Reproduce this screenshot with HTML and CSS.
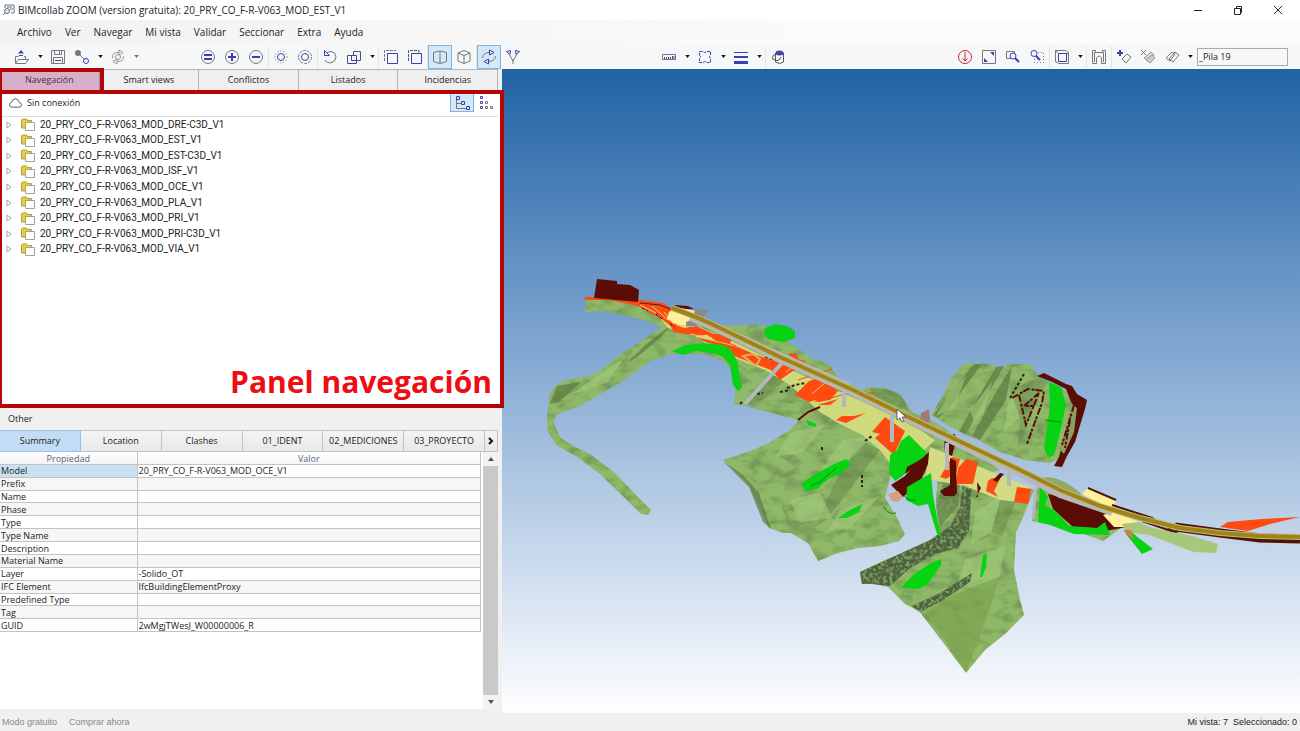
FILE: index.html
```html
<!DOCTYPE html>
<html lang="es">
<head>
    <meta charset="UTF-8">
    <meta name="viewport" content="width=device-width, initial-scale=1.0">
    <title>BIMcollab ZOOM</title>
    <link rel="stylesheet" href="styles.css">
</head>
<body>
    <!-- Shared icons -->
    <svg class="sprite" aria-hidden="true">
        <symbol id="caret" viewBox="0 0 6 4"><path d="M0 0h6L3 4z" fill="currentColor"/></symbol>
        <symbol id="folder" viewBox="0 0 14 13">
            <path d="M.500 10V2l1-1h4l1 1.500h4V5H4.500v5z" fill="#eccb3c" stroke="#b89c2c"/>
            <path d="M4.500 4.500h9v8h-9z" fill="#fff" stroke="#a3a096"/>
        </symbol>
        <symbol id="expand" viewBox="0 0 6 8"><path d="M1 1l4 3-4 3z" fill="#fff" stroke="#a5a5a5"/></symbol>
    </svg>

    <header class="titlebar">
        <svg class="app-icon" viewBox="0 0 12 12"><path d="M2 1h9v8H8M2 1v3M4 3h5M7 5h3" fill="none" stroke="#66737f"/><circle cx="4" cy="7" r="2.500" fill="#dde9f1" stroke="#586c7c"/><path d="M2 9L0 11" stroke="#586c7c"/></svg>
        <h1>BIMcollab ZOOM (version gratuita): 20_PRY_CO_F-R-V063_MOD_EST_V1</h1>
        <div class="window-controls">
            <button aria-label="Minimizar"><svg viewBox="0 0 10 10"><path d="M1 5.500h8"/></svg></button>
            <button aria-label="Restaurar"><svg viewBox="0 0 10 10"><path d="M1.500 3.500h6v6h-6zM3.500 3V1.500h5v6H8"/></svg></button>
            <button aria-label="Cerrar"><svg viewBox="0 0 10 10"><path d="M1 1l8 8M9 1L1 9"/></svg></button>
        </div>
    </header>

    <nav class="menubar" aria-label="Menú">
        <button>Archivo</button>
        <button>Ver</button>
        <button>Navegar</button>
        <button>Mi vista</button>
        <button>Validar</button>
        <button>Seccionar</button>
        <button>Extra</button>
        <button>Ayuda</button>
    </nav>

    <div class="toolbar">
        <div class="toolbar-left">
            <div class="tools">
                <button aria-label="Abrir"><svg viewBox="0 0 16 16"><path class="g" d="M1.500 14V7.500h3M1.500 14.500h10l3-4h-10l-3 4M11.500 10V7.500H10"/><path class="bf" d="M7 1l3 3.500H4z"/><path class="b" d="M5 6.500h4"/></svg></button>
                <button class="drop" aria-label="Abrir opciones"><svg><use href="#caret"/></svg></button>
                <button aria-label="Guardar"><svg viewBox="0 0 16 16"><path class="g" d="M1.500 1.500h13v13h-13zM4.500 1.500v4h7v-4M3.500 14V8.500h9V14"/><path class="b" d="M9.500 2.500v2M5 11.500h6"/></svg></button>
                <button aria-label="Vincular"><svg viewBox="0 0 16 16"><circle cx="4" cy="4" r="3" fill="#777"/><path class="g" d="M5 5l6 6"/><circle class="b" cx="12" cy="12" r="2.500"/></svg></button>
                <button class="drop" aria-label="Vincular opciones"><svg><use href="#caret"/></svg></button>
                <button aria-label="Sincronizar"><svg viewBox="0 0 16 16"><circle class="l" cx="8" cy="8" r="2.500"/><path class="l" d="M2.500 9Q2 3 9 3.500M13.500 7q.500 6-6.500 5.500M9 1l4 2.500L9 6zM7 10l-4 2.500L7 15z"/></svg></button>
                <button class="drop muted" aria-label="Sincronizar opciones"><svg><use href="#caret"/></svg></button>
            </div>
            <div class="tools">
                <button aria-label="Igual"><svg viewBox="0 0 16 16"><circle class="g" cx="8" cy="8" r="6.500"/><path class="bb" d="M4 6h8M4 10h8"/></svg></button>
                <button aria-label="Añadir"><svg viewBox="0 0 16 16"><circle class="g" cx="8" cy="8" r="6.500"/><path class="bb" d="M4 8h8M8 4v8"/></svg></button>
                <button aria-label="Quitar"><svg viewBox="0 0 16 16"><circle class="g" cx="8" cy="8" r="6.500"/><path class="bb" d="M4 8h8"/></svg></button>
                <i class="sep"></i>
                <button aria-label="Mostrar"><svg viewBox="0 0 16 16"><circle class="b" cx="8" cy="8" r="3.500"/><circle class="g dots" cx="8" cy="8" r="6"/></svg></button>
                <button aria-label="Aislar"><svg viewBox="0 0 16 16"><circle class="b" cx="8" cy="8" r="3.500"/><circle class="g dash" cx="8" cy="8" r="6.500"/></svg></button>
                <i class="sep"></i>
                <button aria-label="Restablecer"><svg viewBox="0 0 16 16"><path class="g" d="M5 3.500Q9 1 12.500 4q3 4 0 8-4 3.500-8 1L3 11"/><path class="b" d="M2.500 1.500v5h5z"/></svg></button>
                <button aria-label="Componentes"><svg viewBox="0 0 16 16"><path class="d" d="M1.500 14.500v-8h6v-4h7v9h-4"/><path class="b" d="M7.500 6.500h-2v5h5v-5zM1.500 14.500h9v-3"/></svg></button>
                <button class="drop" aria-label="Componentes opciones"><svg><use href="#caret"/></svg></button>
                <i class="sep"></i>
                <button aria-label="Seleccionar"><svg viewBox="0 0 16 16"><path class="g dash" d="M1.500 12V1.500H13"/><path class="b" d="M4.500 4.500h10v10h-10z"/></svg></button>
                <button aria-label="Selección múltiple"><svg viewBox="0 0 16 16"><path class="b" d="M4.500 4.500h10v10h-10z"/><path class="d dash" d="M1.500 12V1.500H12V4"/></svg></button>
                <i class="sep"></i>
                <button class="active" aria-label="Perspectiva"><svg viewBox="0 0 16 16"><path class="g" d="M1.500 3.500L8 2l6.500 1.500v9L8 14.500l-6.500-2zM8 2v12"/></svg></button>
                <button aria-label="Ortogonal"><svg viewBox="0 0 16 16"><path class="g" d="M2 4l6-2.500L14 4v8l-6 2.500L2 12zM2 4l6 2.500L14 4M8 6.500v8"/></svg></button>
                <i class="sep"></i>
                <button class="active" aria-label="Orbitar"><svg viewBox="0 0 16 16"><path class="g" d="M1.500 9Q2 4 8 3.500M14.500 7Q14 12 8 12.500"/><path class="b" d="M8.500 1v5L13 3.500zM7.500 10v5L3 12.500z"/></svg></button>
                <button aria-label="Caminar"><svg viewBox="0 0 16 16"><path class="g" d="M4 5l4 7 4-7M8 10v5"/><path class="b" d="M1.500 2.500l4-1-.500 4zM14.500 2.500l-4-1 .500 4z"/></svg></button>
            </div>
        </div>
        <div class="toolbar-right">
            <div class="tools">
                <button aria-label="Medir"><svg viewBox="0 0 16 16"><path class="g" d="M1.500 5.500h13v5h-13z"/><path class="b" d="M3.500 8v2M5.500 8v2M7.500 8v2M9.500 8v2M11.500 7v3M13 7v3"/></svg></button>
                <button class="drop" aria-label="Medir opciones"><svg><use href="#caret"/></svg></button>
                <button aria-label="Nube"><svg viewBox="0 0 16 16"><path class="b cloud-line" d="M2.500 6.500v-4H6q2 2 4 0h3.500v4q-2 1.500 0 3v4H10q-2-2-4 0H2.500v-4q2-1.500 0-3z"/></svg></button>
                <button class="drop" aria-label="Nube opciones"><svg><use href="#caret"/></svg></button>
                <button aria-label="Grosor"><svg viewBox="0 0 16 16"><path class="bf" d="M1 3h14v1H1zM1 7h14v2H1zM1 12h14v3H1z"/></svg></button>
                <button class="drop" aria-label="Grosor opciones"><svg><use href="#caret"/></svg></button>
                <i class="sep"></i>
                <button aria-label="Color"><svg viewBox="0 0 16 16"><path class="d" d="M5.500 4v9q4 3 8 0V4M5.500 5Q2 6 2.500 10l3 1"/><ellipse cx="9.500" cy="4" rx="4" ry="2.500" fill="#4545a6"/><path class="d" d="M5 12q5 0 6-4"/></svg></button>
            </div>
            <div class="tools">
                <button aria-label="Plano de corte"><svg viewBox="0 0 16 16"><circle class="r" cx="8" cy="8" r="6.500"/><path class="r" d="M8 3v9M5.500 9.500L8 12l2.500-2.500"/></svg></button>
                <button aria-label="Pantalla completa"><svg viewBox="0 0 16 16"><path class="g" d="M1.500 1.500h13v13h-13z"/><path class="bf" d="M9 3h4v4zM3 9v4h4z"/></svg></button>
                <button aria-label="Acercar"><svg viewBox="0 0 16 16"><path class="g" d="M6 9.500H1.500v-7h8V4"/><circle class="b" cx="8" cy="7" r="3"/><path class="bb" d="M10 9l4 4"/></svg></button>
                <button aria-label="Zoom ventana"><svg viewBox="0 0 16 16"><path class="g dots" d="M9 3.500h5.500v10h-9V10"/><circle class="b" cx="5" cy="4.500" r="3"/><path class="bb" d="M7 7l4 4"/></svg></button>
                <i class="sep"></i>
                <button aria-label="Vistas"><svg viewBox="0 0 16 16"><path class="g" d="M1.500 1.500h10l3 2v11h-10l-3-2zM1.500 1.500l3 3h10"/><path class="b" d="M4.500 4.500h8v8h-8z"/></svg></button>
                <button class="drop" aria-label="Vistas opciones"><svg><use href="#caret"/></svg></button>
                <i class="sep"></i>
                <button aria-label="Espacios"><svg viewBox="0 0 16 16"><path class="g" d="M1.500 1.500h3v2h7v-2h3v13h-4V9q-2.500-4-5 0v5.500h-4zM3.500 3v10M12.500 3v10"/></svg></button>
                <i class="sep"></i>
                <button aria-label="Añadir plano"><svg viewBox="0 0 16 16"><path class="bb" d="M1 4h6M4 1v6"/><path class="g" d="M11 5l4 3-5 6-4-4z"/></svg></button>
                <button aria-label="Borrar plano"><svg viewBox="0 0 16 16"><path class="g" d="M1 1l5 5M6 1L1 6"/><path d="M11 3l3 3-5 6-5-3z" fill="#d5d5d5" stroke="#999"/><path d="M12 6l3 3-5 5-4-3z" fill="#ccc" stroke="#999"/></svg></button>
                <button aria-label="Planos"><svg viewBox="0 0 16 16"><path class="g" d="M8 3l3 2-5 7-4-3zM11 3l4 3-6 7-4-3z"/></svg></button>
                <button class="drop" aria-label="Planos opciones"><svg><use href="#caret"/></svg></button>
                <input class="view-name" type="text" aria-label="Vista" value="_Pila 19">
            </div>
        </div>
    </div>

    <main class="workspace">
        <aside class="sidebar">
            <div class="tabs">
                <button class="tab marked">Navegación</button>
                <button class="tab">Smart views</button>
                <button class="tab">Conflictos</button>
                <button class="tab">Listados</button>
                <button class="tab">Incidencias</button>
            </div>

            <section class="nav-panel">
                <div class="nav-header">
                    <svg class="cloud" viewBox="0 0 14 10"><path d="M3.500 9.500h7q3 0 3-2.500 0-2-2.500-2.500Q10.500.500 7 .500T3 4Q.500 4.500.500 7t3 2.500z" fill="none" stroke="#555"/></svg>
                    <span>Sin conexión</span>
                    <div class="nav-modes">
                        <button class="active" aria-label="Árbol"><svg viewBox="0 0 16 16"><path class="g" d="M2.500 4v9.500H12M2.500 8.500H7"/><path class="b" d="M2.500 1.500h3v3h-3zM7.500 6.500h3v3h-3zM12.500 11.500h3v3h-3z"/></svg></button>
                        <button aria-label="Lista"><svg viewBox="0 0 16 16"><path class="b" d="M2.500 1.500h2v2h-2zM2.500 6.500h2v2h-2zM2.500 11.500h2v2h-2z"/><path class="g" d="M7.500 6.500h2v2h-2zM7.500 11.500h2v2h-2zM12.500 11.500h2v2h-2z"/></svg></button>
                    </div>
                </div>
                <ul class="tree">
                    <li><svg class="expand"><use href="#expand"/></svg><svg class="folder"><use href="#folder"/></svg>20_PRY_CO_F-R-V063_MOD_DRE-C3D_V1</li>
                    <li><svg class="expand"><use href="#expand"/></svg><svg class="folder"><use href="#folder"/></svg>20_PRY_CO_F-R-V063_MOD_EST_V1</li>
                    <li><svg class="expand"><use href="#expand"/></svg><svg class="folder"><use href="#folder"/></svg>20_PRY_CO_F-R-V063_MOD_EST-C3D_V1</li>
                    <li><svg class="expand"><use href="#expand"/></svg><svg class="folder"><use href="#folder"/></svg>20_PRY_CO_F-R-V063_MOD_ISF_V1</li>
                    <li><svg class="expand"><use href="#expand"/></svg><svg class="folder"><use href="#folder"/></svg>20_PRY_CO_F-R-V063_MOD_OCE_V1</li>
                    <li><svg class="expand"><use href="#expand"/></svg><svg class="folder"><use href="#folder"/></svg>20_PRY_CO_F-R-V063_MOD_PLA_V1</li>
                    <li><svg class="expand"><use href="#expand"/></svg><svg class="folder"><use href="#folder"/></svg>20_PRY_CO_F-R-V063_MOD_PRI_V1</li>
                    <li><svg class="expand"><use href="#expand"/></svg><svg class="folder"><use href="#folder"/></svg>20_PRY_CO_F-R-V063_MOD_PRI-C3D_V1</li>
                    <li><svg class="expand"><use href="#expand"/></svg><svg class="folder"><use href="#folder"/></svg>20_PRY_CO_F-R-V063_MOD_VIA_V1</li>
                </ul>
                <p class="panel-label">Panel navegación</p>
            </section>

            <section class="details">
                <h2>Other</h2>
                <div class="detail-tabs">
                    <button class="selected">Summary</button>
                    <button>Location</button>
                    <button>Clashes</button>
                    <button>01_IDENT</button>
                    <button>02_MEDICIONES</button>
                    <button>03_PROYECTO</button>
                    <button class="next" aria-label="Siguiente"><svg viewBox="0 0 6 8"><path d="M1 1l3 3-3 3" fill="none" stroke="#111" stroke-width="2"/></svg></button>
                </div>
                <div class="detail-body">
                    <div class="table-wrap">
                        <table>
                            <thead>
                                <tr><th>Propiedad</th><th>Valor</th></tr>
                            </thead>
                            <tbody>
                                <tr class="current"><td>Model</td><td>20_PRY_CO_F-R-V063_MOD_OCE_V1</td></tr>
                                <tr><td>Prefix</td><td></td></tr>
                                <tr><td>Name</td><td></td></tr>
                                <tr><td>Phase</td><td></td></tr>
                                <tr><td>Type</td><td></td></tr>
                                <tr><td>Type Name</td><td></td></tr>
                                <tr><td>Description</td><td></td></tr>
                                <tr><td>Material Name</td><td></td></tr>
                                <tr><td>Layer</td><td>-Solido_OT</td></tr>
                                <tr><td>IFC Element</td><td>IfcBuildingElementProxy</td></tr>
                                <tr><td>Predefined Type</td><td></td></tr>
                                <tr><td>Tag</td><td></td></tr>
                                <tr><td>GUID</td><td>2wMgjTWesJ_W00000006_R</td></tr>
                            </tbody>
                        </table>
                    </div>
                    <div class="scrollbar" aria-hidden="true">
                        <svg class="up"><use href="#caret"/></svg>
                        <div class="thumb"></div>
                        <svg><use href="#caret"/></svg>
                    </div>
                </div>
            </section>
        </aside>

        <section class="viewport" aria-label="Modelo 3D">
            <svg viewBox="502 69 798 644" preserveAspectRatio="xMidYMid slice">
                <defs>
                    <!-- Grain for the terrain mesh -->
                    <filter id="mesh" x="0" y="0" width="1" height="1">
                        <feTurbulence type="fractalNoise" baseFrequency="0.06 0.1" numOctaves="4" seed="7"/>
                        <feColorMatrix values="0 0 0 0 .18  0 0 0 0 .32  0 0 0 0 .1  3 0 0 0 -1.300"/>
                        <feComposite in2="SourceGraphic" operator="in" result="grain"/>
                        <feMerge><feMergeNode in="SourceGraphic"/><feMergeNode in="grain"/></feMerge>
                    </filter>
                    <filter id="rough" x="0" y="0" width="1" height="1">
                        <feTurbulence type="fractalNoise" baseFrequency="0.3" numOctaves="3" seed="3"/>
                        <feColorMatrix values="0 0 0 0 .22  0 0 0 0 .32  0 0 0 0 .14  4 0 0 0 -1.800"/>
                        <feComposite in2="SourceGraphic" operator="in" result="grain"/>
                        <feMerge><feMergeNode in="SourceGraphic"/><feMergeNode in="grain"/></feMerge>
                    </filter>
                </defs>

                <!-- Terrain -->
                <g fill="#8fb968" filter="url(#mesh)">
                    <path d="M585 300L625 300 660 304 700 326 740 325 764 325 800 350 812 358 830 365 838 378 862 390 872 387 886 388 900 394 912 412 940 425 1000 470 960 480 890 470 830 430 800 420 790 418 746 406 734 404 735 394 737 378 725 362 705 354 688 354 670 354 648 362 637 371 618 384 600 394 580 406 556 415 554 424 560 437 573 446 590 454 615 473 637 496 651 510 648 515 641 514 625 498 600 474 576 456 556 445 547 430 547 415 550 394 557 384 570 379 590 376 603 369 615 358 640 342 662 327 645 320 622 315 600 311 585 312z"/>
                    <path d="M800 419L790 430 767 444 748 452 723 460 740 475 748 483 758 503 769 528 783 533 791 533 808 543 818 561 838 553 858 548 880 546 899 541 905 534 895 514 885 498 892 470 900 450 850 410z"/>
                    <path d="M860 572L885 560 920 548 938 537 936 500 940 450 1034 490 1022 520 1016 532 1014 570 1020 600 1024 615 1005 634 985 650 966 673 945 645 920 612 905 604 888 587 873 584 862 584z"/>
                    <path d="M963 364L983 363 999 367 1013 364 1030 364 1040 378 1073 395 1078 420 1066 455 1050 463 1025 460 1000 452 980 441 958 431 931 415 944 394 950 380z"/>
                    <path d="M1035 488L1060 484 1100 508 1125 525 1103 541 1068 528 1032 521z"/>
                </g>
                <path d="M1040 478q20-4 42 17l-8 3z" fill="#8dab62"/>

                <!-- Terrain folds -->
                <g fill="#5d7a42" opacity=".7">
                    <path d="M974 364l8 0-34 46-10 8-5-3z"/>
                    <path d="M996 367l8-1-24 42-14 26-7-3 20-35z"/>
                    <path d="M1012 366l-6 34-26 40-8-4 24-44z"/>
                    <path d="M672 324l-28 22-16 16 8-4 24-20z"/>
                    <path d="M557 386l24-4-22 20-9 2z"/>
                    <path d="M723 461l20 14 16 18 12 36-8-7-14-35z"/>
                    <path d="M870 388l16 1 16 8 7 14-16-6-20-10z" opacity=".6"/>
                    <path d="M860 440l20 10-40 52-14 18-10 6 18-42z" opacity=".6"/>
                    <path d="M780 500l10 18 36 15-22 2-16-10z" opacity=".4"/>
                    <path d="M770 374l-16 22-8 10 20-8 30-28z" opacity=".6"/>
                    <path d="M780 402l24-20 6 4-16 18zM810 410l24-14 12 10-20 16z" opacity=".4"/>
                    <path d="M1000 500l18-4-16 40-10-4z" opacity=".5"/>
                </g>
                <g fill="#a4cb7c" opacity=".6">
                    <path d="M790 433l34-8-22 28-26 3z"/>
                    <path d="M842 440l30-4-32 34-22 5z"/>
                    <path d="M790 500l30-8 12 26-32 4z"/>
                    <path d="M840 510l40-14-30 32-22 3z"/>
                    <path d="M950 392l16-16-12 32-18 8z"/>
                    <path d="M970 410l22-28-8 30-10 10z"/>
                    <path d="M1008 404l14-22-4 36-14 14z"/>
                    <path d="M975 512l26-16-10 36-20 12z"/>
                    <path d="M965 560l40-14-8 46-40-6z"/>
                    <path d="M592 380l32-22-16 24-40 14z"/>
                </g>
                <path d="M926 612l25-16 50-20-18 52-17 44z" fill="#7ba24e" opacity=".7"/>
                <g fill="#4b6338" filter="url(#rough)">
                    <path d="M860 572L895 556 930 540 950 526 960 508 963 480 972 480 969 530 958 548 936 554 910 568 890 586 873 584 862 584z"/>
                    <path d="M944 480l16 4-2 22-18 20-4-20z" opacity=".5"/>
                    <path d="M912 606l28-13 32-20-2 9-30 20-20 10z"/>
                    <path d="M1010 390l32-14 8 4-14 18-12 36-6 14 2-30z" opacity=".25"/>
                </g>

                <!-- Cut and fill slopes -->
                <path d="M650 306L680 318 740 345 800 374 870 405 920 430 935 440 920 454 895 470 880 450 862 435 840 424 820 412 790 385 765 370 740 360 710 346 690 333 668 328z" fill="#cfda7d"/>
                <path d="M930 447L975 465 1030 487 1028 503 1000 500 975 490 965 486 925 479z" fill="#d3dc83"/>
                <g fill="#ff4a12">
                    <path d="M585 297l40 1 38 5 16 10 2 9-9 5-12-9-22-12-28-6-25 0z"/>
                    <path d="M668 322l16 6 12-2 18 8-18 2-22-4z"/>
                    <path d="M706 334l12 0 14 6-3 4-13-3z"/>
                    <path d="M696 337l42 10 18 8 26 8 12 7-14 10-9-10-24-9-30-12z"/>
                    <path d="M790 358l16 3-10 8-13 8-7-6z"/>
                    <path d="M820 378l14 5-8 14-17 5-14-7 14-14z"/>
                    <path d="M832 386l6 5-8 9-16 2zM838 399l-8 6-12 0z"/>
                    <path d="M842 416l12 0 12-3-20 10-10-3z"/>
                    <path d="M885 417L905 431 897 448 894 455 875 438 880 434 872 432z"/>
                    <path d="M952 457l8 2-4 14-10 6-6-2 6-10z"/>
                    <path d="M966 459l12 3-5 22-17 0 2-16z"/>
                    <path d="M992 478l8 1-6 12 4 6-12-6 2-10z"/>
                    <path d="M1017 487l14 2-3 15-14-2z"/>
                    <path d="M788 353l8 1 4 8-6-2z"/>
                    <path d="M1220 527l8-5 34-3 38-2-30 7-22 7z"/>
                </g>
                <path d="M743 356l10-2 7 5-4 7z" fill="none" stroke="#d9b45f" stroke-width="2"/>
                <path d="M798 380l34-11M808 393l28-10M818 402l30-9M780 377l18-10M855 396l20-4M716 338l20 8M724 352l14 2" fill="none" stroke="#ff4a12"/>
                <path d="M640 305l16 8M652 306l16 14M664 312l10 12M690 334l22 4M704 342l26 8M786 372l12-10M812 394l14-12" fill="none" stroke="#cfda7d"/>
                <path d="M642 308l6 3M656 314l6 5M670 324l5 3M765 357l8 3" fill="none" stroke="#5a0d05" stroke-dasharray="3 2"/>

                <!-- Dark brown volumes -->
                <g fill="#5a0d05">
                    <path d="M597 279l20 2v3l13 1 9 5-1 12-44-4z"/>
                    <path d="M674 305l14 1 6 3-12 0z"/>
                    <path d="M1037 376l7-3 22 11 6 2 5 8 10 6-2 9-10 33-8 14-5 11-8-1 5-9 5-20 10-28-8-20-16-8z"/>
                    <path d="M944 437l11-3 1 7-4 15-7-3z"/>
                    <path d="M917 462l12-10-1 12-6 14-2 6-17 13-12-12 14-9z"/>
                    <path d="M950 458l6 3 1 32-3 3-10 0-4-5 10-6z"/>
                    <path d="M1048 494l34 8 38 15 6 10-20 4-33-4-20-18z"/>
                    <path d="M978 497h-2l5-9-4-6z"/>
                    <path d="M1000 473l4 1-7 8-4-2z"/>
                </g>
                <!-- Mesh still visible inside the brown rim -->
                <path d="M1070 402l7 6-3 24-10 22-4-4 8-28z" fill="#86a160"/>
                <path d="M1012 398l16-9 16 2-2 12-10 27-5 14M1019 395l7 30 13-32-15 13 10 0M1074 405l-12 40M1070 420l-5 28" fill="none" stroke="#5a0d05" stroke-width="2" stroke-dasharray="7 2 3 1"/>
                <path d="M798 420l10-8 12-5" fill="none" stroke="#5a0d05" stroke-width="2"/>
                <path d="M787 388l8-3 10-2M740 404l3-3M757 394l6-1M780 392l10-2M822 447v4M862 475v12M865 441l7-5M1024 374l-14 24" fill="none" stroke="#322512" stroke-width="2" stroke-dasharray="3 2"/>

                <!-- Bright green volumes -->
                <g fill="#06d412">
                    <path d="M765 328l10-4 12 2 8 5 0 7-12 4-15-3-4-6z"/>
                    <path d="M672 351l14-6 18-2 20 2 8 6 5 10 5 26-4 4-5-6-3-20-8-9-10-3-16-2-13 4z"/>
                    <path d="M802 483l12-8 20-11 12-5 5 5-9 9-14 6-11 10-12 2z"/>
                    <path d="M838 518l12-8 12-6-3 8-12 6z"/>
                    <path d="M901 441l8-6 18 18-11 12-15 12-6 4-6-8 1-18 7-5z"/>
                    <path d="M907 487l24-14 2 22 5 28 3 14-4-3-9-30-10 2-12-6z"/>
                    <path d="M901 588l12-13 18-12 10-4 0 6-14 20-8 4z"/>
                    <path d="M983 555l4-2-1 14-4 10-2 0z"/>
                    <path d="M1049 382l12 5 5 17-6 29-6 22-6 3-4-10 6-42z"/>
                    <path d="M1040 487l8 10-3 8 10 6 14 15 28 2 8-6 5 13-36-1-24-9-12-3z"/>
                    <path d="M1125 525l10 10 18 14-11 5-16-20z"/>
                    <path d="M806 420l10 4 0 3-8-2z"/>
                </g>
                <path d="M926 456l-9 9-12 9 2-7 11-6z" fill="#5a0d05"/>
                <path d="M916 500q-10 1-12-5M884 507q4 8 12 6M1045 420l16 2M810 486l10-4 16-14" fill="none" stroke="#078b0e"/>

                <!-- Portals and piers -->
                <path d="M669 312l7-5 19 4-4 12 4 4-20-3-8-5z" fill="#ffef9f"/>
                <path d="M695 309l15 1-8 8-8-3zM686 322l8-3 4 8-12-1z" fill="#8b8b86"/>
                <path d="M1082 494l6-6 28 13-4 9zM1103 515l10-3 26 10-10 5-15 0z" fill="#fff19b"/>
                <path d="M1088 488l28 12M1112 505l40 13 25 15-35-12" fill="none" stroke="#4b1905" stroke-width="2"/>
                <path d="M1138 522l14 6 40 8 26 8-2 9-22-1-45-17-22-3-5-8z" fill="#a7c779"/>
                <path d="M1123 530l8 0 3 10-6-5z" fill="#de764b"/>
                <path d="M888 494l10-3 5 6-5 5-6-1z" fill="#d9a07f"/>
                <g stroke="#b5b7bf" fill="none">
                    <path d="M690 318Q712 326 780 360L853 393 900 416 980 455 1020 474 1060 495 1112 513" stroke-width="6"/>
                    <path d="M844 391v16M892 416v26M947 443v27M1009 472v14M782 363l-37 41" stroke-width="4"/>
                    <path d="M1036 488l-3 31M692 320l12 5" stroke-width="3"/>
                    <path d="M700 317L780 353 850 384" stroke-width="2"/>
                </g>
                <path d="M921 413l8-4 1 10-2 5-8-3z" fill="#9e7b7a"/>

                <!-- Rail corridor -->
                <path d="M1175 527L1220 533 1260 538 1300 539" fill="none" stroke="#4f1207" stroke-width="9"/>
                <path d="M672 308Q700 318 720 328L780 357 853 390 900 413 980 451 1020 470 1060 490 1100 506 1140 518 1180 528 1220 533 1260 536 1300 537" fill="none" stroke="#c6b57d" stroke-width="6"/>
                <path d="M672 308Q700 318 720 328L780 357 853 390 900 413 980 451 1020 470 1060 490 1100 506 1140 518 1180 528 1220 533 1260 536 1300 537" fill="none" stroke="#9c8418" stroke-width="4"/>
                <path d="M640 303l20 2 10 4" fill="none" stroke="#49200d"/>

                <!-- Cursor -->
                <path d="M897 409v11l3-2 2 4 2-1-2-4h4z" fill="#fff" stroke="#333" stroke-width=".7"/>
            </svg>
        </section>
    </main>

    <footer class="statusbar">
        <span>Modo gratuito</span>
        <a href="#">Comprar ahora</a>
        <span class="counts">Mi vista: 7&nbsp; Seleccionado: 0</span>
    </footer>
</body>
</html>
```

FILE: styles.css
```css
:root {
    --red: #b40606;
    --blue: #3c3fb2;
    --gray: #777;
    --line: #c3c3c3;
    --chrome: #f0f0f0;
    --active: #d3e8f8;
    --active-line: #83b3d8;
    --text: #222;
}

* {
    box-sizing: border-box;
}

body {
    display: flex;
    flex-direction: column;
    min-height: 100vh;
    margin: 0;
    background: var(--chrome);
    color: var(--text);
    font: 10px/14px "Open Sans", "Noto Sans", sans-serif;
}

button {
    display: flex;
    align-items: center;
    justify-content: center;
    margin: 0;
    padding: 0;
    border: 0;
    background: none;
    color: inherit;
    font: inherit;
    white-space: nowrap;
}

.sprite {
    display: none;
}

/* Title bar and menu */
.titlebar {
    display: flex;
    align-items: center;
    height: 20px;
    padding: 0 2px 0 3px;
    background: #fff;
}

.app-icon {
    width: 12px;
    height: 12px;
    margin-right: 3px;
}

h1 {
    flex: 1;
    margin: 0;
    font-size: 10px;
    font-weight: 400;
}

.window-controls {
    display: flex;
}

.window-controls button {
    width: 40px;
    height: 20px;
}

.window-controls svg {
    width: 10px;
    height: 10px;
    fill: none;
    stroke: #222;
}

.menubar {
    display: flex;
    gap: 13px;
    align-items: center;
    height: 24px;
    padding-left: 17px;
    background: linear-gradient(90deg, #f2f2f2, #fcfcfc 75%);
}

/* Toolbar */
.toolbar,
.workspace {
    display: grid;
    grid-template-columns: minmax(0, 502fr) minmax(0, 798fr);
}

.toolbar {
    height: 25px;
    background: #f6f7f8;
}

.toolbar-left,
.toolbar-right,
.tools {
    display: flex;
    align-items: center;
}

.toolbar-left {
    gap: 54px;
    padding-left: 10px;
}

.toolbar-right {
    justify-content: space-between;
    padding: 0 12px 0 155px;
}

.tools button {
    flex: none;
    width: 24px;
    height: 24px;
}

.tools button svg,
.nav-modes svg {
    width: 16px;
    height: 16px;
}

.tools button.active,
.nav-modes .active {
    border: 1px solid var(--active-line);
    background: var(--active);
}

.tools button.drop {
    width: 12px;
    color: #111;
}

.tools button.drop svg {
    width: 5px;
    height: 3px;
}

.tools button.muted {
    color: #777;
}

.sep {
    width: 1px;
    height: 22px;
    background: #e6e6e6;
}

.b, .bb, .g, .l, .d, .r {
    fill: none;
    stroke: var(--gray);
}

.b, .bb {
    stroke: var(--blue);
}

.bb {
    stroke-width: 2;
}

.bf {
    fill: var(--blue);
}

.l {
    stroke: #999;
}

.d {
    stroke: #555;
}

.r {
    stroke: #d3202e;
}

.dash {
    stroke-dasharray: 3 1;
}

.dots {
    stroke-dasharray: 1 2;
}

.cloud-line {
    stroke-dasharray: 3 1;
}

.view-name {
    width: 91px;
    height: 18px;
    margin-left: 1px;
    padding: 0 1px;
    border: 1px solid #aaa;
    background: #f6f7f8;
    color: var(--text);
    font: inherit;
    font-size: 9px;
}

/* Sidebar */
.workspace {
    flex: 1;
}

.sidebar {
    display: flex;
    flex-direction: column;
    min-width: 0;
    font-size: 9px;
}

.tabs {
    display: grid;
    grid-template-columns: repeat(5, 1fr);
    height: 21px;
    margin-right: 4px;
}

.tab {
    position: relative;
    border: solid #b5b5b5;
    border-width: 1px 1px 0 0;
    background: #efefef;
}

/* Red frame drawn over the first tab */
.marked::after {
    content: "";
    position: absolute;
    inset: -2px -5px -4px -2px;
    z-index: 2;
    border: 4px solid var(--red);
    background: rgba(170, 60, 130, 0.35);
}

.nav-panel {
    position: relative;
    flex: 321 0 0;
    padding: 3px 4px 0 2px;
    background: #fff;
}

/* Red frame drawn over the whole panel */
.nav-panel::after {
    content: "";
    position: absolute;
    inset: 0 -2px 0 -2px;
    z-index: 1;
    border: 4px solid var(--red);
    pointer-events: none;
}

.nav-header {
    display: flex;
    align-items: center;
    height: 24px;
    padding: 0 0 4px 7px;
    border-bottom: 1px solid #ddd;
}

.cloud {
    width: 13px;
    height: 10px;
    margin-right: 5px;
}

.nav-modes {
    display: flex;
    margin-left: auto;
}

.nav-modes button {
    width: 24px;
    height: 19px;
}

.tree {
    display: flex;
    flex-direction: column;
    height: 140px;
    margin: 0;
    padding: 0 0 0 4px;
    font-family: Roboto, "Open Sans", sans-serif;
    font-size: 10px;
    list-style: none;
}

.tree li {
    display: flex;
    flex: 1;
    align-items: center;
}

.expand {
    width: 6px;
    height: 8px;
    margin-right: 9px;
}

.folder {
    width: 14px;
    height: 13px;
    margin-right: 5px;
}

.panel-label {
    position: absolute;
    right: 10px;
    bottom: 8px;
    margin: 0;
    color: #ee0d12;
    font: bold 30px/36px "Open Sans", "Noto Sans", sans-serif;
}

.details {
    display: flex;
    flex: 302 0 0;
    flex-direction: column;
    padding: 4px 4px 4px 0;
}

h2 {
    margin: 0;
    padding: 0 8px 4px;
    font-size: 9px;
    font-weight: 400;
}

.detail-tabs {
    display: grid;
    grid-template-columns: repeat(6, 1fr) 13px;
    height: 22px;
}

.detail-tabs button {
    border: 1px solid var(--line);
    border-left: 0;
    background: linear-gradient(#f4f4f4, #e8e8e8);
}

.detail-tabs .selected {
    border-color: #98bfe4;
    background: #c3dcf5;
}

.next svg {
    width: 6px;
    height: 8px;
}

.detail-body {
    display: flex;
    flex: 1;
    background: #fff;
}

.table-wrap {
    flex: 1;
}

table {
    width: 100%;
    height: 180px;
    border-collapse: collapse;
    table-layout: fixed;
    line-height: 11px;
}

th,
td {
    height: 12px;
    padding: 0 1px;
    border: 1px solid var(--line);
    text-align: left;
}

td:first-child {
    border-left: 0;
}

th {
    border-top: 0;
    border-left: 0;
    background: linear-gradient(#fff, #f4f4f4);
    color: #52687b;
    font-weight: 400;
    text-align: center;
}

th:first-child {
    width: 137px;
}

tbody tr:nth-child(even) {
    background: #f6f6f6;
}

.current td:first-child {
    background: #c9e2f3;
}

.scrollbar {
    display: flex;
    flex-direction: column;
    align-items: center;
    width: 15px;
    margin-left: 2px;
    background: #f2f2f2;
}

.scrollbar svg {
    width: 6px;
    height: 4px;
    margin: 5px 0;
    color: #555;
}

.scrollbar .up {
    transform: rotate(180deg);
}

.thumb {
    flex: 1;
    width: 100%;
    background: #c9c9c9;
}

/* Model view */
.viewport {
    position: relative;
    overflow: hidden;
    background: linear-gradient(#2062a4, #86abd3 46%, #c3d5ea 73%, #fff);
}

.viewport svg {
    position: absolute;
    inset: 0;
    width: 100%;
    height: 100%;
}

.statusbar {
    display: flex;
    align-items: center;
    gap: 12px;
    height: 18px;
    padding: 0 3px 0 2px;
    color: #888;
    font: 9px/14px "Liberation Sans", sans-serif;
}

.statusbar a {
    color: inherit;
    text-decoration: none;
}

.counts {
    margin-left: auto;
    color: var(--text);
}
```
